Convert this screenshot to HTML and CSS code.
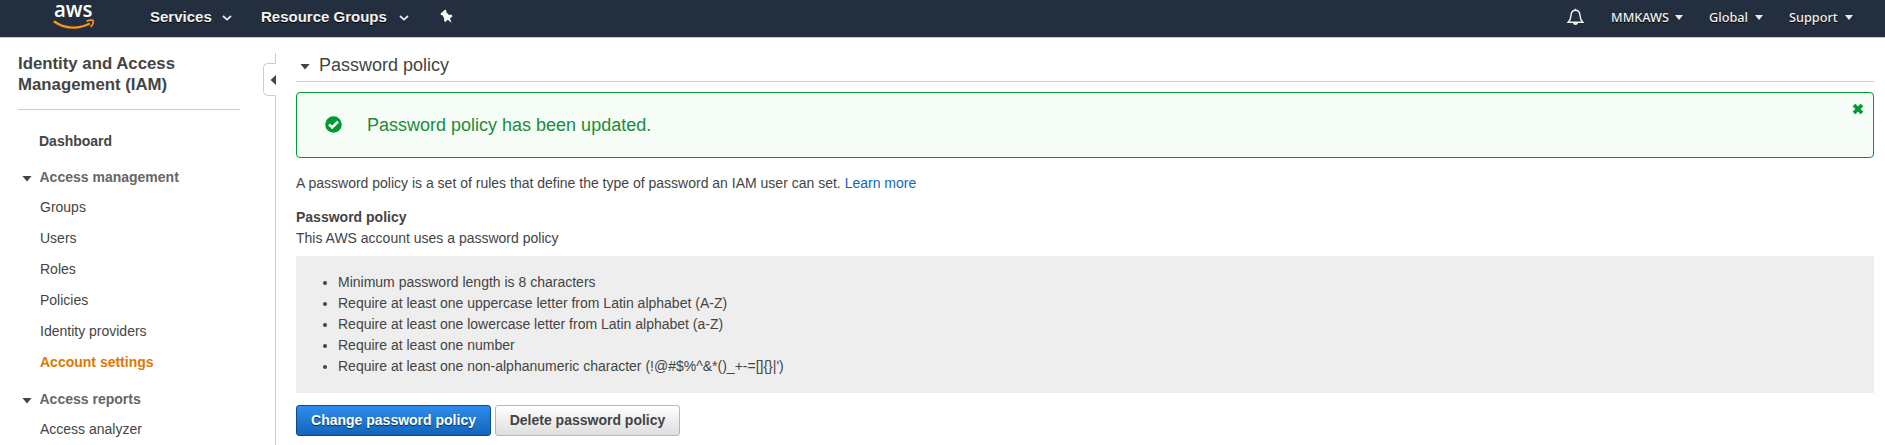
FILE: index.html
```
<!DOCTYPE html>
<html lang="en">
<head>
<meta charset="utf-8">
<title>IAM Management Console</title>
<link rel="stylesheet" href="styles.css">
</head>
<body>
<header class="topbar">
  <svg class="logo" width="42" height="30" viewBox="0 0 42 30" role="img" aria-label="aws">
    <text class="logo-text" x="1" y="17.4" textLength="38.5" lengthAdjust="spacingAndGlyphs">aws</text>
    <path d="M0.8 21.2C12 29.3 26 29.3 36.8 23.6" fill="none" stroke="#f79420" stroke-width="2.3"/>
    <path d="M33.5 21.1C37 19.8 40 19.8 40.2 20.8C40.4 22.5 39.3 25.3 37.6 26.8" fill="none" stroke="#f79420" stroke-width="1.7"/>
  </svg>
  <nav class="menu">
    <a class="menu-item services">Services</a>
    <svg class="chev" width="10" height="8" viewBox="0 0 10 8"><path d="M1 2L5 5.6L9 2" fill="none" stroke="#e8e8e8" stroke-width="1.8"/></svg>
    <a class="menu-item groups">Resource Groups</a>
    <svg class="chev" width="10" height="8" viewBox="0 0 10 8"><path d="M1 2L5 5.6L9 2" fill="none" stroke="#e8e8e8" stroke-width="1.8"/></svg>
    <svg class="pin" width="14" height="15" viewBox="0 0 14 15"><path d="M0.5 4.8L5.2 0.6L6.4 1.4L6.2 3L8.8 5.8L11.6 5.8L12.6 7.2L10 9.4L11.6 14L7.8 10.8L5.4 13L4.2 12L4 9.2L2.4 6L1 6.3Z" fill="#f6f6f6"/></svg>
  </nav>
  <nav class="account">
    <svg class="bell" width="17" height="18" viewBox="0 0 17 18"><path d="M8.5 0.8V2.2M1.2 14.2C3.2 12.4 3.8 11.3 4 7.4C4.2 4.2 6 2.2 8.5 2.2S12.8 4.2 13 7.4C13.2 11.3 13.8 12.4 15.8 14.2Z" fill="none" stroke="#f2f2f2" stroke-width="1.4"/><path d="M6 15h5a2.5 2 0 0 1-5 0Z" fill="#eee"/></svg>
    <span class="acct-item mmk">MMKAWS</span><i class="caret"></i>
    <span class="acct-item global">Global</span><i class="caret"></i>
    <span class="acct-item support">Support</span><i class="caret"></i>
  </nav>
</header>
<div class="page">
  <aside class="sidebar">
    <h1 class="service-name">Identity and Access<br>Management (IAM)</h1>
    <ul class="nav">
      <li class="nav-top">Dashboard</li>
      <li class="nav-group"><i class="arrow"></i>Access management</li>
      <li class="nav-link">Groups</li>
      <li class="nav-link">Users</li>
      <li class="nav-link">Roles</li>
      <li class="nav-link">Policies</li>
      <li class="nav-link">Identity providers</li>
      <li class="nav-link active">Account settings</li>
      <li class="nav-group second"><i class="arrow"></i>Access reports</li>
      <li class="nav-link">Access analyzer</li>
    </ul>
  </aside>
  <div class="divider">
    <svg class="handle" width="13" height="43" viewBox="0 0 13 43"><path d="M12.5 0V10.5H4.5Q0.5 10.5 0.5 14.5V38.5Q0.5 42.5 4.5 42.5H12.5" fill="none" stroke="#ccc"/><path d="M13 22V32L7.5 27Z" fill="#444"/></svg>
    <div class="rule"></div>
  </div>
  <main class="content">
    <h2 class="section-title"><i class="arrow"></i>Password policy</h2>
    <div class="alert">
      <svg class="ok" width="17" height="17" viewBox="0 0 17 17"><circle cx="8.5" cy="8.5" r="8.3" fill="#093"/><path d="M4 8.3L7.2 11.5L13 5.6" fill="none" stroke="#fff" stroke-width="2.6"/></svg>
      <span class="alert-text">Password policy has been updated.</span>
      <svg class="close" width="12" height="12" viewBox="0 0 12 12"><path d="M2 2L10 10M10 2L2 10" stroke="#093" stroke-width="3.8"/></svg>
    </div>
    <p class="intro">A password policy is a set of rules that define the type of password an IAM user can set. <a class="link">Learn more</a></p>
    <h3 class="subhead">Password policy</h3>
    <p class="status">This AWS account uses a password policy</p>
    <ul class="rules">
      <li>Minimum password length is 8 characters</li>
      <li>Require at least one uppercase letter from Latin alphabet (A-Z)</li>
      <li>Require at least one lowercase letter from Latin alphabet (a-Z)</li>
      <li>Require at least one number</li>
      <li>Require at least one non-alphanumeric character (!@#$%^&amp;*()_+-=[]{}|')</li>
    </ul>
    <div class="actions">
      <button class="btn primary">Change password policy</button>
      <button class="btn">Delete password policy</button>
    </div>
  </main>
</div>
</body>
</html>
```

FILE: styles.css
```
* { box-sizing: border-box; margin: 0; padding: 0; }
html, body { height: 100%; overflow: hidden; }
body { font: 14px/21px "Liberation Sans", Arial, sans-serif; color: #444; background: #fff; }
ul { list-style: none; }
svg { display: block; flex: none; }

.topbar { display: flex; align-items: flex-start; height: 38px; padding-left: 53px; background: #232f3e; border-bottom: 1px solid #c4c6c8; }
.logo { overflow: visible; }
.logo-text { font: 600 21.5px "Open Sans", sans-serif; fill: #fff; }
.menu { display: flex; align-items: center; height: 32px; margin-left: 55px; }
.menu-item { font-size: 15px; font-weight: bold; color: #f2f2f2; text-shadow: 0 1px 0 #000; white-space: nowrap; }
.services { width: 72px; }
.groups { width: 138px; margin-left: 29px; }
.chev { margin-top: 4px; }
.pin { margin-left: 31px; margin-top: 1px; }
.account { display: flex; align-items: center; height: 34px; margin-left: auto; padding-right: 32px; }
.bell { margin-right: 27px; }
.acct-item { font: 500 12.7px/20px "Noto Sans", sans-serif; color: #f0f0f0; text-shadow: 0 1px 0 #000; white-space: nowrap; }
.mmk { width: 64px; }
.global { width: 46px; margin-left: 26px; }
.support { width: 56px; margin-left: 26px; }
.caret { width: 8px; height: 5px; margin-top: 1px; background: #eee; clip-path: polygon(0 0, 100% 0, 50% 100%); }

.page { display: flex; height: 407px; }
.sidebar { width: 263px; padding: 15px 23px 0 18px; flex: none; }
.service-name { height: 57px; border-bottom: 1px solid #ccc; font-size: 16.8px; line-height: 21px; }
.nav-top { margin-top: 21px; padding-left: 21px; font-weight: bold; }
.nav-group { display: flex; align-items: center; margin-top: 15px; padding-left: 4px; font-weight: bold; color: #666; }
.nav-link { height: 31px; padding: 9px 0 0 22px; }
.active { color: #e07700; font-weight: bold; }
.second { margin-top: 15px; }
.arrow { width: 10px; height: 6px; margin: 2px 7.5px 0 0; background: #444; clip-path: polygon(0 0, 100% 0, 50% 100%); }

.divider { display: flex; flex-direction: column; width: 13px; padding-top: 15px; flex: none; }
.rule { flex: 1; border-right: 1px solid #ccc; }

.content { flex: 1; min-width: 0; padding: 14px 11px 0 20px; }
.section-title { display: flex; align-items: center; height: 30px; padding: 0 0 2px 4px; border-bottom: 1px solid #ccc; font-size: 18px; font-weight: normal; }
.section-title .arrow { margin-right: 9px; }
.alert { display: flex; align-items: flex-start; height: 66px; margin-top: 10px; padding: 22px 9px 0 28px; border: 1px solid #093; border-radius: 4px; background: #f5fdf6; color: #1d8a3c; font-size: 18px; }
.ok { margin-top: 1px; }
.alert-text { margin-left: 25px; }
.close { margin: -12px 0 0 auto; }
.intro { margin-top: 15px; }
.link { color: #1166bb; }
.subhead { margin-top: 13px; font-size: 14px; }
.rules { height: 137px; margin-top: 7px; padding: 16px 0 0 42px; background: #eee; list-style: disc; }
.actions { display: flex; gap: 4px; margin-top: 12px; }
.btn { height: 31px; width: 185px; padding-bottom: 1px; border: 1px solid #b7b7b7; border-radius: 3px; background: linear-gradient(#fff, #dedede); color: #444; font: bold 14px "Liberation Sans", Arial, sans-serif; white-space: nowrap; }
.primary { width: 195px; border-color: #0a4a8c; background: linear-gradient(#2e8cec, #1464ba); color: #fff; text-shadow: 0 1px 1px #034; }
```
